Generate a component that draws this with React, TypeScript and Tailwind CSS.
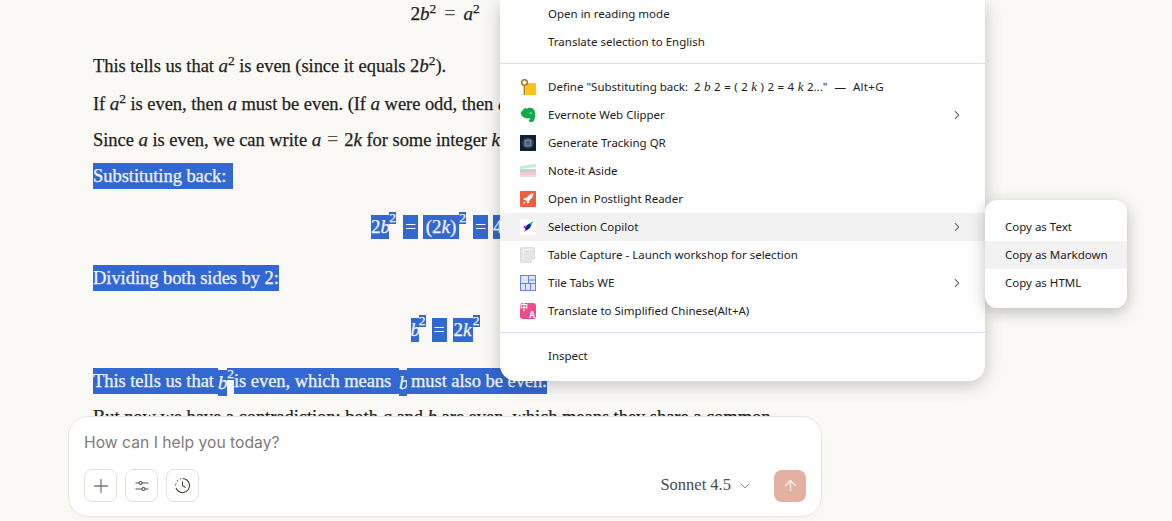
import { Plus, ChevronDown, ChevronRight, ArrowUp } from "lucide-react";
import type { ReactNode } from "react";

const serif = "font-['Liberation_Serif',serif]";

function I({ children }: { children: ReactNode }) {
  return <span className="italic text-[19px]">{children}</span>;
}
function S({ children }: { children: ReactNode }) {
  return <span className="text-[13.500px] align-[7px] leading-none">{children}</span>;
}
function Eq({ className = "mx-[6px]" }: { className?: string }) {
  return <span className={`text-[20px] font-normal text-[#55544f] [-webkit-text-stroke:0px] ${className}`}>=</span>;
}
function Row({ children, className = "" }: { children: ReactNode; className?: string }) {
  return <div className={`h-[26px] leading-[26px] whitespace-nowrap ${className}`}>{children}</div>;
}
function M({ children, className = "" }: { children: ReactNode; className?: string }) {
  return (
    <span className={`block h-[24px] mt-[1px] leading-[24px] bg-[#3367d1] text-[#f4f6fc] text-[19px] ${className}`}>
      {children}
    </span>
  );
}
function MS({ className = "" }: { className?: string }) {
  return (
    <span className={`block w-[7px] h-[12px] -mt-[2px] leading-[12px] bg-[#3367d1] text-[#f4f6fc] text-[13.500px] text-center ${className}`}>
      2
    </span>
  );
}
function Sel({ children, className = "" }: { children: ReactNode; className?: string }) {
  return <span className={`block h-[26px] leading-[26px] bg-[#3367d1] text-[#f4f6fc] ${className}`}>{children}</span>;
}

function KeyIcon() {
  return (
    <svg width="16" height="17" viewBox="0 0 16 17">
      <rect x="6" y="4" width="10" height="12" rx="1" fill="#fbc417" />
      <circle cx="4.500" cy="3.500" r="2.800" fill="none" stroke="#a9792a" strokeWidth="1.600" />
      <path d="M4.500 6.500V16" stroke="#a9792a" strokeWidth="1.800" />
    </svg>
  );
}
function EvernoteIcon() {
  return (
    <svg width="16" height="16" viewBox="0 0 16 16">
      <path d="M2.500 3.500 5.500.5l1 1.500C7.500.8 9 .500 10.500.800c2.800.5 4.200 2.200 4.500 4.700.3 3 .1 5.800-1 8-.9 1.800-3.600 1.900-4.700.9-.9-.8-.3-2.200.9-2.100l.6.2-1.800-1.500c-1 .5-2.500.5-3.800 0C3 10.200 1.200 8.800.800 6.800c-.2-1.300.5-2.400 1.700-3.300Z" fill="#13a94a" />
      <path d="M9.500 6.200c1-.5 2-.3 2.500.5" stroke="#fff" strokeWidth=".9" fill="none" />
    </svg>
  );
}
function QrIcon() {
  return (
    <svg width="16" height="16" viewBox="0 0 16 16">
      <rect width="16" height="16" fill="#0c1f33" />
      <circle cx="8" cy="8" r="5.600" fill="#24445c" />
      <rect x="4.500" y="4.500" width="7" height="7" fill="#76818a" />
      <rect x="6" y="6" width="4" height="4" fill="#525d66" />
    </svg>
  );
}
function NoteIcon() {
  return (
    <svg width="16" height="16" viewBox="0 0 16 16">
      <path d="M0 3 16 1v3L0 6Z" fill="#cfe6d8" />
      <path d="M0 6h16v3H0Z" fill="#b7dcc4" />
      <path d="M0 9h16v3H0Z" fill="#f9c4d8" />
      <path d="M0 12h16v2H0Z" fill="#f4d9e3" />
    </svg>
  );
}
function RocketIcon() {
  return (
    <svg width="16" height="16" viewBox="0 0 16 16">
      <rect width="16" height="16" rx="1" fill="#ef5f3d" />
      <path d="M13.500 2.500c-3 .2-5 1.600-6.500 4L4.500 7 3 8.800l2.400.3 1.500 1.500.3 2.400L9 11.500l.5-2.500c2.400-1.500 3.800-3.500 4-6.500Z" fill="#fff" />
      <path d="M4.500 10.500 2.500 13.500l3-2Z" fill="#fff" />
    </svg>
  );
}
function CopilotIcon() {
  return (
    <svg width="16" height="16" viewBox="0 0 16 16">
      <rect width="16" height="16" fill="#fff" />
      <path d="M13 2.500 7 6 4.500 9.500l2 2L10 9Z" fill="#0d2a8f" />
      <path d="M13 2.500 9.500 4.500 11 6.500Z" fill="#19c7d8" />
      <path d="M6 6 3 8l2 1.200Z" fill="#d51ad8" />
      <path d="M5.500 10.500 3.500 13l3-1.500Z" fill="#b316e0" />
    </svg>
  );
}
function TableIcon() {
  return (
    <svg width="16" height="16" viewBox="0 0 16 16">
      <path d="M2 .5h11A1.500 1.500 0 0 1 14.500 2v9.500L10.500 15.500H2A1.500 1.500 0 0 1 .5 14V2A1.500 1.500 0 0 1 2 .5Z" fill="#e6e6e6" stroke="#dcdcdc" />
      <path d="M3 2h9v1H4v9H3Z" fill="#f2f2f2" />
      <path d="M10.500 15.500v-4h4Z" fill="#f8f8f8" stroke="#cfcfcf" strokeWidth=".6" />
    </svg>
  );
}
function TileIcon() {
  return (
    <svg width="16" height="16" viewBox="0 0 16 16">
      <rect x=".5" y=".5" width="15" height="15" fill="#dfe5fa" stroke="#6a83e0" />
      <path d="M8.500 1v7M.5 8.500h15M8.500 5h7M5.500 8.500v7M10.500 8.500v7" stroke="#6a83e0" fill="none" />
    </svg>
  );
}
function TranslateIcon() {
  return (
    <span className="relative block h-4 w-4 overflow-hidden rounded-[3px] bg-[#ec4c8c] font-['Noto_Sans_CJK_SC','Noto_Sans',sans-serif] font-bold leading-none text-white">
      <span className="absolute left-[0px] top-[0px] text-[8px] leading-none">中</span>
      <span className="absolute bottom-[0px] right-[1px] text-[9px] leading-none">A</span>
    </span>
  );
}

function MenuRow({
  icon,
  children,
  arrow,
  active,
}: {
  icon?: ReactNode;
  children: ReactNode;
  arrow?: boolean;
  active?: boolean;
}) {
  return (
    <div className={`flex h-7 items-center pl-5 pr-[21px] ${active ? "bg-[#f2f2f2]" : ""}`}>
      <span className="flex w-7 shrink-0">{icon}</span>
      <span className="flex-1 whitespace-nowrap">{children}</span>
      {arrow && <ChevronRight size={14} strokeWidth={1.800} className="text-[#444]" />}
    </div>
  );
}

function Var({ children }: { children: ReactNode }) {
  return <em className={`${serif} text-[13px]`}>{children}</em>;
}

export default function App() {
  return (
    <div className={`relative h-[521px] w-[1172px] overflow-hidden bg-[#faf9f5] text-[#1f1e1c] ${serif}`}>
      <main className="flex h-full w-[890px] flex-col">
        <div className="h-[416px] overflow-hidden px-[93px] text-[18.500px] tracking-[-0.05px] [-webkit-text-stroke:0.25px]">
          <Row className="text-center">
            <span className="text-[19.500px]">2</span><I>b</I><S>2</S><Eq className="mx-[8px]" /><I>a</I><S>2</S>
          </Row>
          <Row className="mt-[27px]">
            This tells us that <I>a</I><S>2</S> is even (since it equals 2<I>b</I><S>2</S>).
          </Row>
          <Row className="mt-[12px]">
            If <I>a</I><S>2</S> is even, then <I>a</I> must be even. (If <I>a</I> were odd, then <I>a</I>
          </Row>
          <Row className="mt-[9px]">
            Since <I>a</I> is even, we can write <I>a</I><Eq />2<I>k</I> for some integer <I>k</I>
          </Row>
          <Row className="mt-[11px] flex">
            <Sel className="w-[140px]">Substituting back:</Sel>
          </Row>
          <Row className="mt-[25px] flex justify-center">
            <M className="w-[18px] text-center">2<I>b</I></M>
            <MS />
            <M className="ml-[7px] w-[15px] text-center">=</M>
            <M className="ml-[5px] w-[36px] text-center">(2<I>k</I>)</M>
            <MS />
            <M className="ml-[7px] w-[15px] text-center">=</M>
            <M className="ml-[5px] w-[19px] text-left">4<I>k</I></M>
            <MS />
          </Row>
          <Row className="mt-[25px] flex">
            <Sel className="w-[186px]">Dividing both sides by 2:</Sel>
          </Row>
          <Row className="mt-[26px] flex justify-center">
            <M className="w-[8px] text-center"><I>b</I></M>
            <MS />
            <M className="ml-[6px] w-[15px] text-center">=</M>
            <M className="ml-[6px] w-[20px] text-center">2<I>k</I></M>
            <MS />
          </Row>
          <Row className="mt-[25px] flex">
            <Sel className="w-[125px]">This tells us that</Sel>
            <Sel className="mt-[2px] h-[24px] w-[9px] leading-[22px]"><I>b</I></Sel>
            <MS className="mt-0" />
            <Sel className="w-[165px]">is even, which means</Sel>
            <Sel className="mt-[2px] h-[24px] w-[8px] leading-[22px]"><I>b</I></Sel>
            <Sel className="w-[140px] pl-[4px]">must also be even.</Sel>
          </Row>
          <Row className="mt-[10px]">
            But now we have a contradiction: both <I>a</I> and <I>b</I> are even, which means they share a common
          </Row>
        </div>

        <div className="mx-auto flex h-[101px] w-[754px] flex-col rounded-[20px] border border-[#e8e6df] bg-white px-[15px] pt-[15px] shadow-[0_2px_8px_rgba(0,0,0,0.02)]">
          <div className="h-[22px] font-['Inter',sans-serif] text-[15.700px] leading-[22px] text-[#7d7c77]">
            How can I help you today?
          </div>
          <div className="mt-[15px] flex items-center">
            <button className="flex h-[33px] w-[33px] items-center justify-center rounded-lg border border-[#e3e1da] text-[#7a7974]">
              <Plus size={22} strokeWidth={1.400} />
            </button>
            <button className="ml-2 flex h-[33px] w-[33px] items-center justify-center rounded-lg border border-[#e3e1da] text-[#55544f]">
              <svg width="16" height="16" viewBox="0 0 16 16" fill="none" stroke="currentColor" strokeWidth="1.100">
                <path d="M1.500 5H5M8 5h6.500M1.500 11H8M11 11h3.500" />
                <circle cx="6.500" cy="5" r="1.500" />
                <circle cx="9.500" cy="11" r="1.500" />
              </svg>
            </button>
            <button className="ml-2 flex h-[33px] w-[33px] items-center justify-center rounded-lg border border-[#e3e1da] text-[#45443f]">
              <svg width="17" height="17" viewBox="0 0 17 17" fill="none" stroke="currentColor" strokeWidth="1.100">
                <path d="M8.500 1.500a7 7 0 1 1-6.500 9.500" />
                <path d="M1.600 8.500c0-1 .2-1.800.5-2.500M3 4.300c.4-.6 1-1.100 1.500-1.500M6 2c.3-.1.500-.2.800-.3" strokeDasharray="1 1" />
                <path d="M8.500 4.500v4l3 2" />
              </svg>
            </button>
            <span className="ml-auto text-[16.500px] text-[#4a4a46]">Sonnet 4.5</span>
            <ChevronDown size={16} strokeWidth={1} className="ml-[6px] text-[#55544f]" />
            <button className="ml-[21px] flex h-8 w-8 items-center justify-center rounded-lg bg-[#e2b1a1] text-[#fdf3ef]">
              <ArrowUp size={17} strokeWidth={1.700} />
            </button>
          </div>
        </div>
      </main>

      <div className="absolute left-[500px] top-0 h-[381px] w-[485px] rounded-b-[16px] bg-white font-['Noto_Sans',sans-serif] text-[11.500px] text-[#202020] shadow-[0_4px_18px_rgba(0,0,0,0.22)]">
        <MenuRow>Open in reading mode</MenuRow>
        <MenuRow>Translate selection to English</MenuRow>
        <div className="h-[17px] pt-[7px]">
          <div className="h-px w-full bg-[#d3e3fd]" />
        </div>
        <MenuRow icon={<KeyIcon />}>
          Define "Substituting back:&nbsp; <span className="[word-spacing:0.5px]">2 <Var>b</Var> 2 = ( 2 <Var>k</Var> ) 2 = 4 <Var>k</Var> 2..."</span>
          <span className="ml-[7px]">—</span>
          <span className="ml-[7px] tracking-[0.3px]">Alt+G</span>
        </MenuRow>
        <MenuRow icon={<EvernoteIcon />} arrow>Evernote Web Clipper</MenuRow>
        <MenuRow icon={<QrIcon />}>Generate Tracking QR</MenuRow>
        <MenuRow icon={<NoteIcon />}>Note-it Aside</MenuRow>
        <MenuRow icon={<RocketIcon />}>Open in Postlight Reader</MenuRow>
        <MenuRow icon={<CopilotIcon />} arrow active>Selection Copilot</MenuRow>
        <MenuRow icon={<TableIcon />}>Table Capture - Launch workshop for selection</MenuRow>
        <MenuRow icon={<TileIcon />} arrow>Tile Tabs WE</MenuRow>
        <MenuRow icon={<TranslateIcon />}>Translate to Simplified Chinese(Alt+A)</MenuRow>
        <div className="h-[17px] pt-[7px]">
          <div className="h-px w-full bg-[#d3e3fd]" />
        </div>
        <MenuRow>Inspect</MenuRow>
      </div>

      <div className="absolute left-[985px] top-[200px] h-[108px] w-[142px] rounded-[12px] bg-white pt-[13px] font-['Noto_Sans',sans-serif] text-[11.500px] text-[#202020] shadow-[0_4px_16px_rgba(0,0,0,0.25)]">
        <div className="flex h-7 items-center pl-5">Copy as Text</div>
        <div className="flex h-7 items-center bg-[#f2f2f2] pl-5">Copy as Markdown</div>
        <div className="flex h-7 items-center pl-5">Copy as HTML</div>
      </div>
    </div>
  );
}
